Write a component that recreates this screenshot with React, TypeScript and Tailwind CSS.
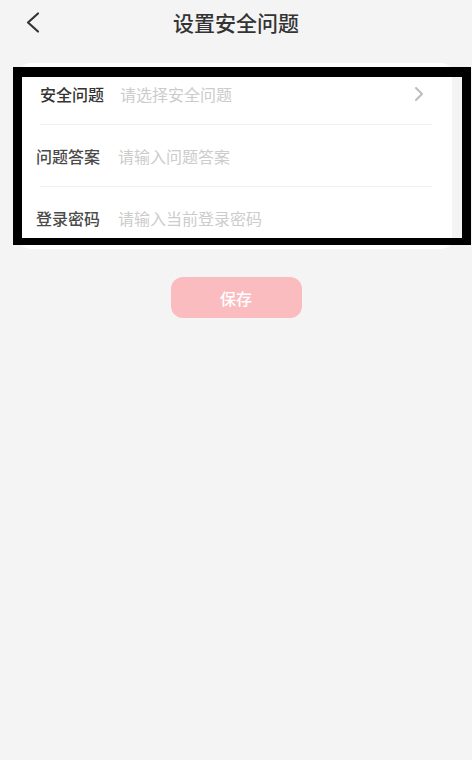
import React from "react";

const rows = [
  { label: "问题答案", placeholder: "请输入问题答案" },
  { label: "登录密码", placeholder: "请输入当前登录密码" },
];

export default function App() {
  return (
    <div
      className="relative min-h-[760px] w-full bg-[#f4f4f4]"
      style={{ fontFamily: '"Noto Sans CJK SC", "Noto Sans", sans-serif' }}
    >
      {/* header */}
      <div className="relative flex h-[44px] items-center justify-center">
        <button className="absolute left-[23px] top-[9px] p-[2px]">
          <svg width="16" height="24" viewBox="0 0 16 24" fill="none">
            <path d="M13 2.5 L3 11.5 L13 20.5" stroke="#333" strokeWidth="2.2" strokeLinecap="round" strokeLinejoin="round" />
          </svg>
        </button>
        <h1 className="text-[21px] font-medium leading-none text-[#333]">设置安全问题</h1>
      </div>

      {/* form card */}
      <div className="mx-[20px] mt-[19px] rounded-[10px] bg-white px-[20px]">
        <div className="flex h-[62px] items-center border-b border-[#f0f0f0]">
          <span className="w-[80px] text-[16px] font-medium text-[#333]">安全问题</span>
          <span className="flex-1 text-[16px] text-[#cccccc]">请选择安全问题</span>
          <svg className="mr-[8px]" width="10" height="16" viewBox="0 0 10 16" fill="none">
            <path d="M2 2 L8 8 L2 14" stroke="#bdbdbd" strokeWidth="2" strokeLinecap="round" strokeLinejoin="round" />
          </svg>
        </div>
        {rows.map((r, i) => (
          <div
            key={r.label}
            className={
              i === 0
                ? "flex h-[62px] items-center border-b border-[#f0f0f0]"
                : "flex h-[62px] items-center"
            }
          >
            <span className="-ml-[4px] w-[82px] text-[16px] font-medium text-[#4a4a4a]">{r.label}</span>
            <input
              className="flex-1 bg-transparent text-[16px] outline-none placeholder:text-[#cccccc]"
              placeholder={r.placeholder}
            />
          </div>
        ))}
      </div>

      {/* save */}
      <div className="mt-[28px] flex justify-center">
        <button className="h-[41px] w-[131px] rounded-[12px] bg-[#fbbcbf] text-[16px] font-medium text-white">
          保存
        </button>
      </div>

      {/* black frame overlay */}
      <div className="pointer-events-none absolute left-[13px] top-[67px] h-[178px] w-[458px] border-t-[10px] border-r-[9px] border-b-[7px] border-l-[9px] border-black" />
    </div>
  );
}
